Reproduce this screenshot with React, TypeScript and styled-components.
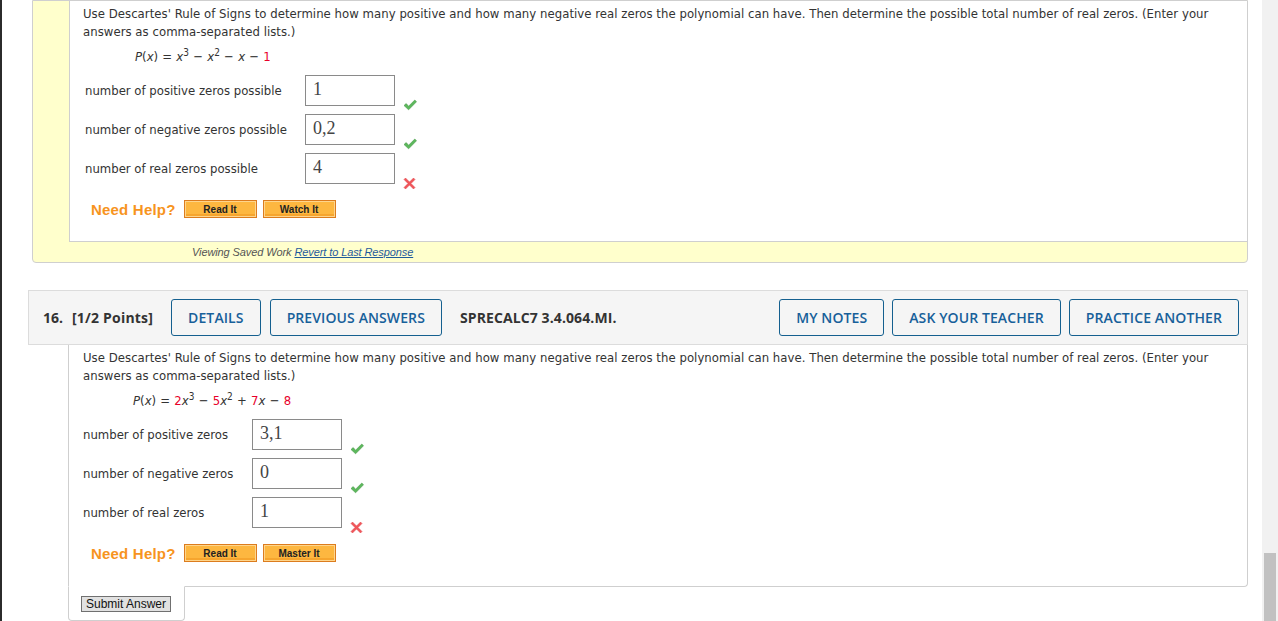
import React from 'react';
import styled, {createGlobalStyle} from 'styled-components';

const GlobalStyle = createGlobalStyle`
body {
  margin: 0;
  background: #fff;
  font-family: "DejaVu Sans Condensed", "DejaVu Sans", sans-serif;
}
`

const Page = styled.div`
display: flex;
height: 621px;
overflow: hidden;
border-left: 2px solid #2b2b2b;
`
const Main = styled.div`
flex: 1;
overflow: hidden;
`
const ScrollTrack = styled.div`
width: 16px;
background: #f1f1f1;
display: flex;
flex-direction: column;
justify-content: flex-end;
align-items: center;
`
const ScrollThumb = styled.div`
width: 12px;
height: 68px;
background: #c1c1c1;
`

// previous question, shown in saved-work mode
const SavedBox = styled.div`
margin: 0 14px 0 30px;
background: #ffffcc;
border: 1px solid #cfcfcf;
border-radius: 0 0 4px 4px;
`
const SavedBody = styled.div`
margin-left: 36px;
background: #fff;
border-left: 1px solid #cfcfcf;
border-bottom: 1px solid #cfcfcf;
padding: 4px 12px 22px 13px;
`
const SavedStrip = styled.div`
height: 20px;
line-height: 20px;
padding-left: 159px;
font-family: "Liberation Sans", Arial, sans-serif;
font-size: 11px;
letter-spacing: -0.1px;
font-style: italic;
color: #555;
a {
  color: #1f5b9c;
  text-decoration: underline;
}
`

const QuestionBlock = styled.div`
margin: 27px 14px 0 26px;
`
const Header = styled.div`
display: flex;
align-items: center;
gap: 9px;
background: #f5f5f5;
border: 1px solid #dcdcdc;
padding: 8px 8px 8px 14px;
font-family: "Open Sans", sans-serif;
`
const QNumber = styled.span`
font-size: 14px;
font-weight: 700;
color: #333;
`
const Points = styled.span`
font-size: 14px;
font-weight: 700;
letter-spacing: 0.2px;
color: #333;
margin-right: 9px;
`
const HeaderButton = styled.button`
box-sizing: border-box;
height: 37px;
padding: 0 16px;
border: 1px solid #15608f;
border-radius: 3px;
font-family: "Open Sans", sans-serif;
font-size: 14px;
font-weight: 600;
letter-spacing: 0.1px;
color: #17609a;
background: #f5f5f5;
`
const Code = styled.span`
font-size: 14px;
font-weight: 700;
letter-spacing: 0.1px;
color: #333;
margin-left: 9px;
`
const RightGroup = styled.div`
margin-left: auto;
display: flex;
gap: 8px;
`
const Body = styled.div`
margin-left: 40px;
background: #fff;
border: 1px solid #cfcfcf;
border-top: none;
border-radius: 0 0 4px 0;
padding: 4px 12px 23px 14px;
`
const SubmitTab = styled.div`
box-sizing: border-box;
display: flex;
align-items: flex-start;
margin: -1px 0 0 40px;
width: 117px;
height: 35px;
padding: 9px 0 0 12px;
background: #fff;
border: 1px solid #cfcfcf;
border-top-color: #fff;
border-radius: 0 0 4px 4px;
`
const SubmitButton = styled.button`
height: 16px;
padding: 0 4px;
background: #e1e1e1;
border: 1px solid #707070;
font-family: "Liberation Sans", Arial, sans-serif;
font-size: 12px;
line-height: 13px;
color: #111;
`

const Prompt = styled.p`
margin: 0;
font-size: 13px;
letter-spacing: 0.04px;
line-height: 18px;
color: #333;
`
const Equation = styled.div<{indent: number}>`
margin: 7px 0 9px ${p => p.indent}px;
font-size: 13px;
line-height: 18px;
color: #333;
word-spacing: 0.5px;
i { font-style: italic; }
sup { font-size: 10px; line-height: 0; }
.c { color: #e8002a; }
`
const Answers = styled.div<{indent: number}>`
padding-left: ${p => p.indent}px;
`
const AnswerRow = styled.div`
display: flex;
align-items: flex-start;
height: 31px;
margin-bottom: 8px;
`
const Label = styled.div<{width: number}>`
width: ${p => p.width}px;
line-height: 31px;
font-size: 13px;
color: #333;
`
const AnswerBox = styled.div`
box-sizing: border-box;
width: 90px;
height: 31px;
border: 1px solid #8a8a8a;
padding: 1px 7px;
font-family: "Liberation Serif", "Times New Roman", serif;
font-size: 18px;
line-height: 24px;
color: #444;
`
const Mark = styled.span`
margin: 24px 0 0 8px;
display: flex;
`
const HelpRow = styled.div`
display: flex;
align-items: center;
gap: 6px;
height: 20px;
margin-top: 15px;
padding-left: 8px;
`
const NeedHelp = styled.span`
font-family: "Liberation Sans", Arial, sans-serif;
font-size: 15px;
font-weight: 700;
letter-spacing: 0.2px;
color: #f7941e;
margin-right: 2px;
`
const HelpButton = styled.button`
box-sizing: border-box;
width: 73px;
height: 18px;
padding: 0;
background: #fdb740;
border: 1px solid #dc7c1e;
box-shadow: inset 0 0 0 1px #fed58c, inset 0 -2px 0 1px #f6a52e;
font-family: "Liberation Sans", Arial, sans-serif;
font-size: 10px;
font-weight: 700;
color: #222;
`

const Check = () => (
  <svg width="14" height="12" viewBox="0 0 14 12">
    <path d="M1 6.5 L3.2 4.6 L5.6 7.2 L11.8 1 L13.5 2.8 L5.6 10.8 Z" fill="#5cb85c" stroke="#4a9a4a" strokeWidth="0.6" strokeLinejoin="round"/>
  </svg>
)

const Cross = () => (
  <svg width="13" height="13" viewBox="0 0 13 13">
    <path d="M2.5 1 L6.5 5 L10.5 1 L12 2.5 L8 6.5 L12 10.5 L10.5 12 L6.5 8 L2.5 12 L1 10.5 L5 6.5 L1 2.5 Z" fill="#f0555a" stroke="#e04448" strokeWidth="0.5" strokeLinejoin="round"/>
  </svg>
)

const promptText = "Use Descartes' Rule of Signs to determine how many positive and how many negative real zeros the polynomial can have. Then determine the possible total number of real zeros. (Enter your answers as comma-separated lists.)"

type Answer = {label: string, value: string, correct: boolean}

const AnswerList = ({answers, labelWidth, indent}: {answers: Answer[], labelWidth: number, indent: number}) => (
  <Answers indent={indent}>
    {answers.map((a, i) => (
      <AnswerRow key={i}>
        <Label width={labelWidth}>{a.label}</Label>
        <AnswerBox>{a.value}</AnswerBox>
        <Mark>{a.correct ? <Check/> : <Cross/>}</Mark>
      </AnswerRow>
    ))}
  </Answers>
)

export default function App() {
  return (
    <Page>
      <GlobalStyle/>
      <Main>
        <SavedBox>
          <SavedBody>
            <Prompt>{promptText}</Prompt>
            <Equation indent={52}>
              <i>P</i>(<i>x</i>) = <i>x</i><sup>3</sup> − <i>x</i><sup>2</sup> − <i>x</i> − <span className="c">1</span>
            </Equation>
            <AnswerList indent={2} labelWidth={220} answers={[
              {label: 'number of positive zeros possible', value: '1', correct: true},
              {label: 'number of negative zeros possible', value: '0,2', correct: true},
              {label: 'number of real zeros possible', value: '4', correct: false},
            ]}/>
            <HelpRow>
              <NeedHelp>Need Help?</NeedHelp>
              <HelpButton>Read It</HelpButton>
              <HelpButton>Watch It</HelpButton>
            </HelpRow>
          </SavedBody>
          <SavedStrip>Viewing Saved Work <a>Revert to Last Response</a></SavedStrip>
        </SavedBox>

        <QuestionBlock>
          <Header>
            <QNumber>16.</QNumber>
            <Points>[1/2 Points]</Points>
            <HeaderButton>DETAILS</HeaderButton>
            <HeaderButton>PREVIOUS ANSWERS</HeaderButton>
            <Code>SPRECALC7 3.4.064.MI.</Code>
            <RightGroup>
              <HeaderButton>MY NOTES</HeaderButton>
              <HeaderButton>ASK YOUR TEACHER</HeaderButton>
              <HeaderButton>PRACTICE ANOTHER</HeaderButton>
            </RightGroup>
          </Header>
          <Body>
            <Prompt>{promptText}</Prompt>
            <Equation indent={50}>
              <i>P</i>(<i>x</i>) = <span className="c">2</span><i>x</i><sup>3</sup> − <span className="c">5</span><i>x</i><sup>2</sup> + <span className="c">7</span><i>x</i> − <span className="c">8</span>
            </Equation>
            <AnswerList indent={0} labelWidth={169} answers={[
              {label: 'number of positive zeros', value: '3,1', correct: true},
              {label: 'number of negative zeros', value: '0', correct: true},
              {label: 'number of real zeros', value: '1', correct: false},
            ]}/>
            <HelpRow>
              <NeedHelp>Need Help?</NeedHelp>
              <HelpButton>Read It</HelpButton>
              <HelpButton>Master It</HelpButton>
            </HelpRow>
          </Body>
          <SubmitTab>
            <SubmitButton>Submit Answer</SubmitButton>
          </SubmitTab>
        </QuestionBlock>
      </Main>
      <ScrollTrack><ScrollThumb/></ScrollTrack>
    </Page>
  )
}
